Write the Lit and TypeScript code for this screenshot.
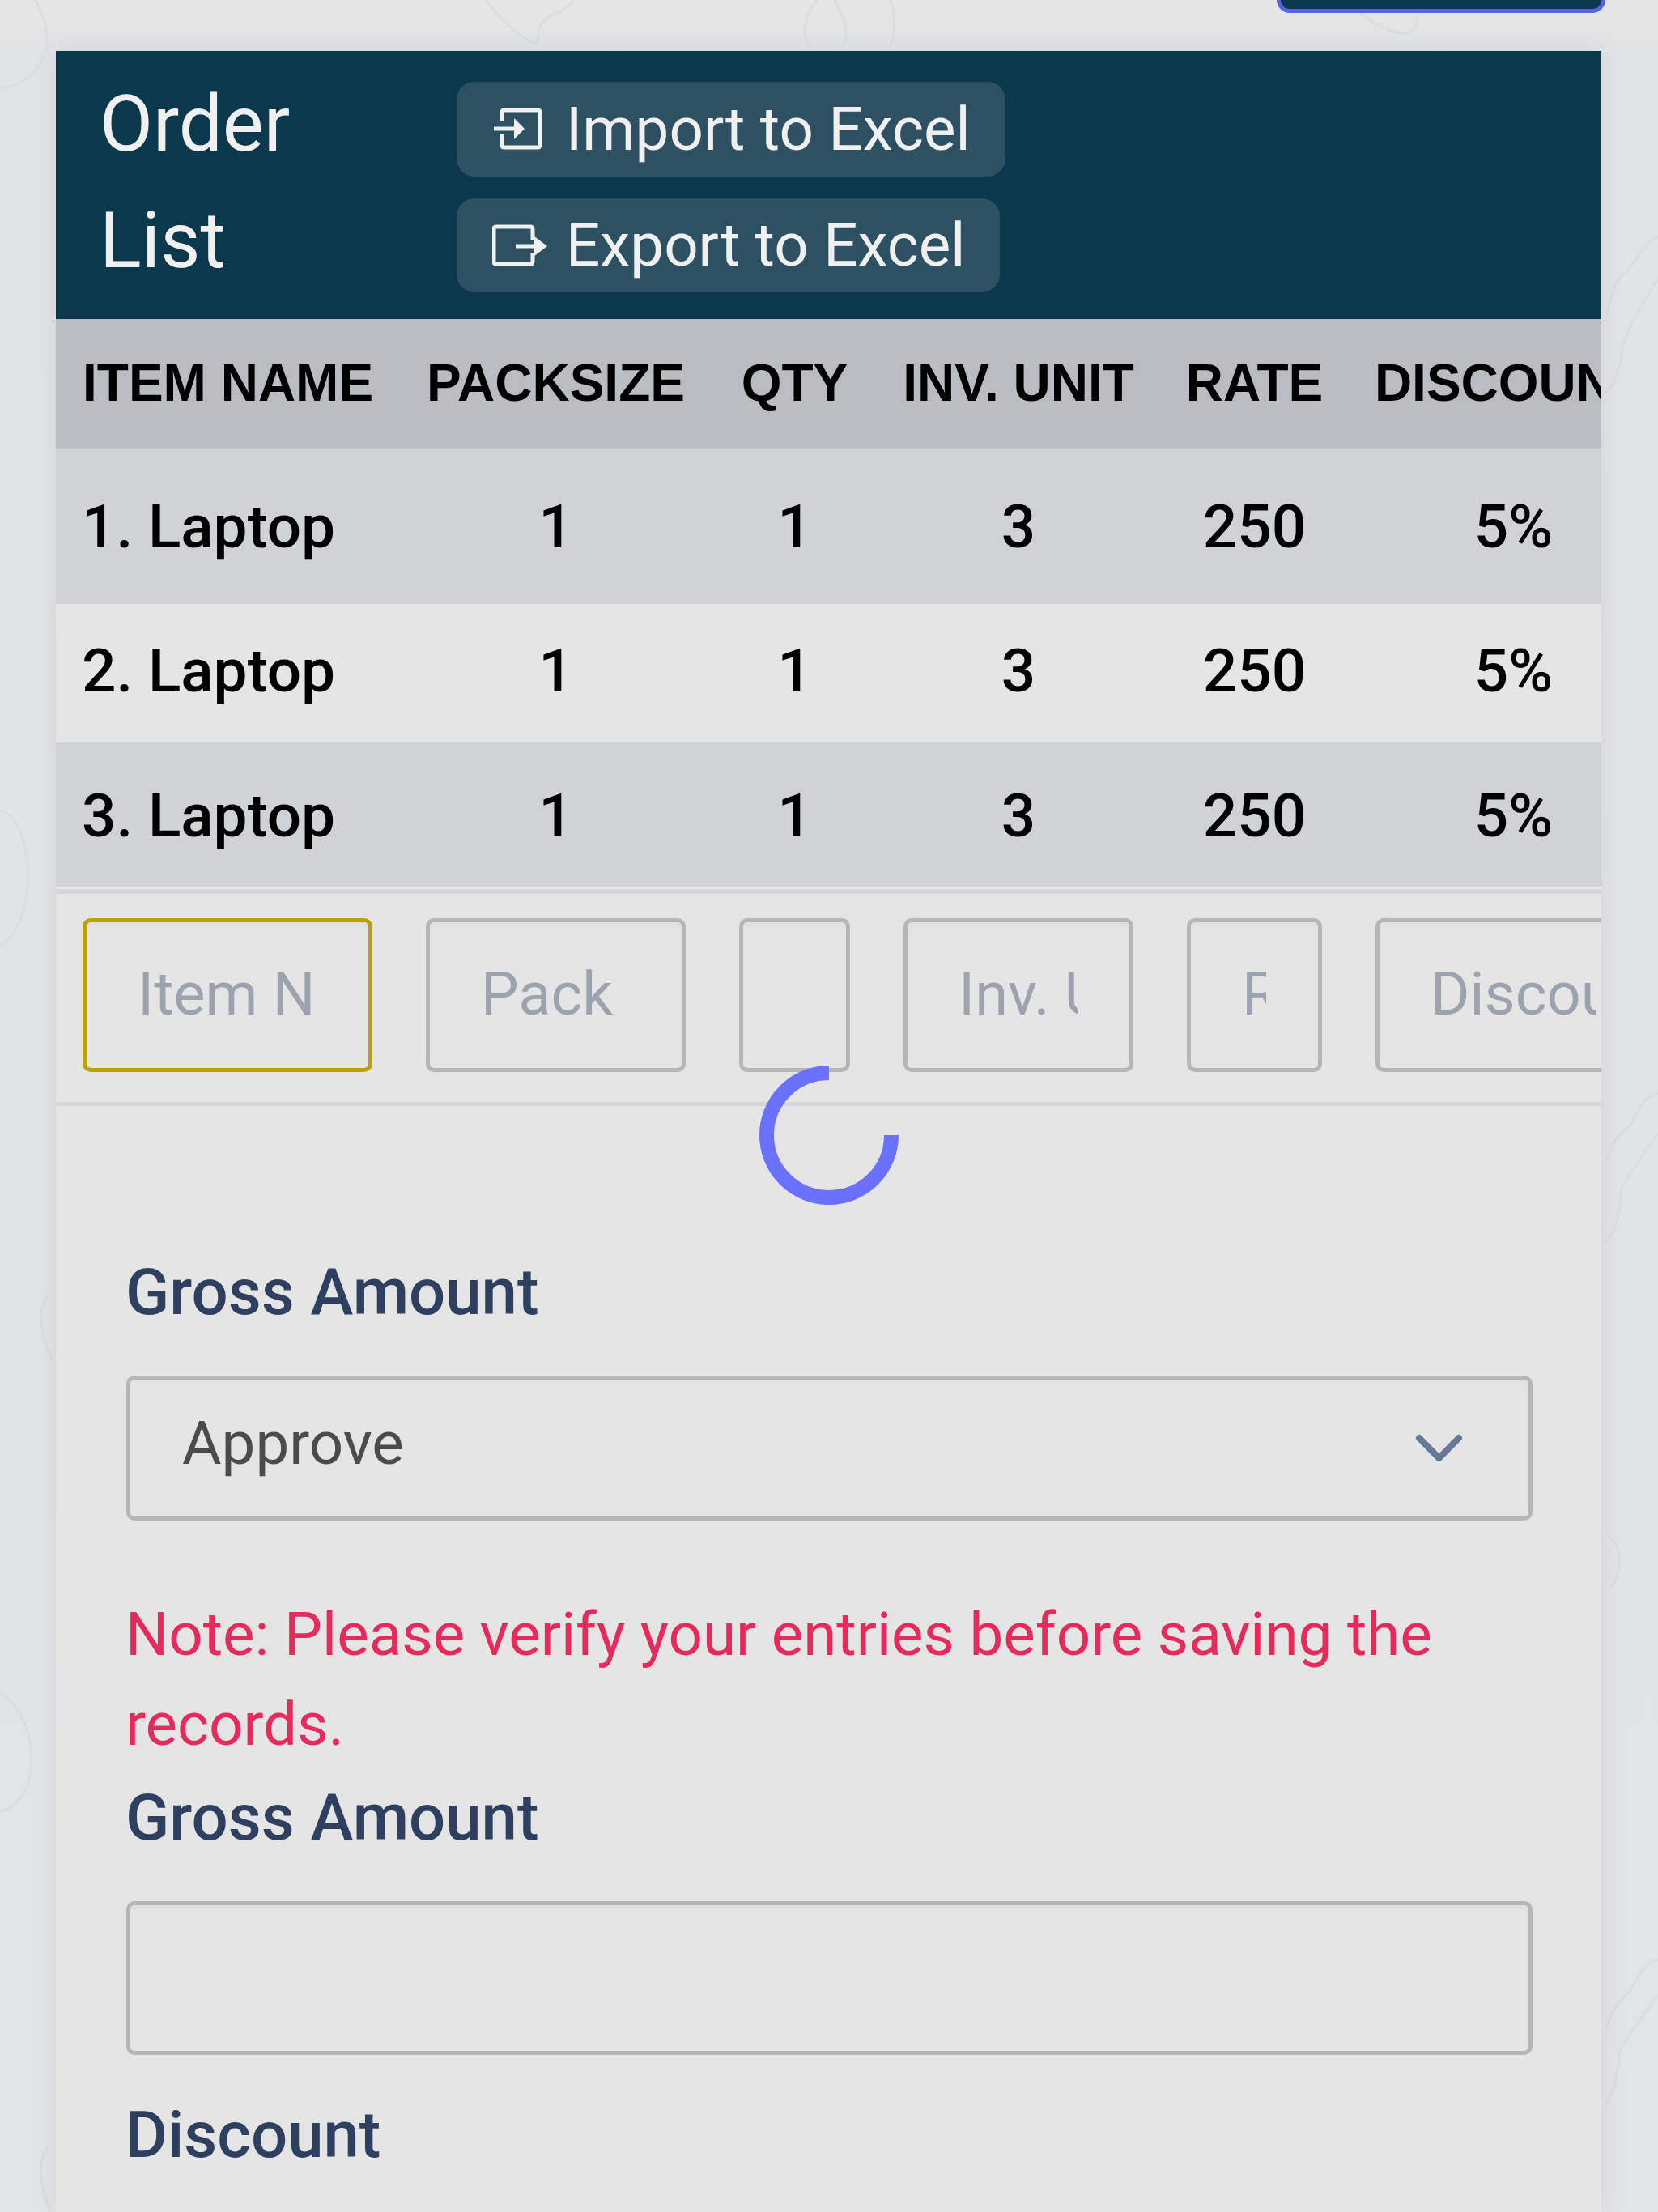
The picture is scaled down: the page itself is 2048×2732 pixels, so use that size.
import { LitElement, html, css, svg } from "lit";
import { customElement } from "lit/decorators.js";

const COLS = ["ITEM NAME", "PACKSIZE", "QTY", "INV. UNIT", "RATE", "DISCOUNT"];
const INPUTS = ["Item Name", "Pack Size", "", "Inv. Unit", "Rate", "Discount"];
const ROWS = [1, 2, 3];

const doodles = svg`
  <path d="M40 -5C70 40 62 85 18 105C8 110 0 108 -6 104"/>
  <path d="M597 -4C615 20 640 45 662 55M662 55C668 40 660 28 684 18C706 8 716 -2 700 -6"/>
  <path d="M1000 58C985 36 1000 12 1012 -4M1040 58C1055 38 1035 12 1030 -4M1100 58C1108 30 1104 10 1098 -4"/>
  <path d="M1680 16C1700 32 1730 48 1745 38C1752 30 1752 24 1750 18"/>
  <path d="M2048 292C2030 300 2022 322 2008 336C1990 350 1990 372 1984 392M2048 345C2030 372 2012 400 2004 430C2002 452 1996 470 1984 486"/>
  <path d="M2048 1350C2030 1354 2024 1370 2014 1390C2002 1398 1990 1412 1984 1435M2048 1400C2030 1425 2012 1450 2002 1470C2002 1495 1996 1520 1984 1535"/>
  <path d="M2048 2420C2030 2425 2022 2445 2012 2460C2002 2470 1992 2480 1984 2505M2048 2465C2030 2490 2012 2510 2000 2535C2000 2560 1994 2580 1984 2600"/>
  <path d="M0 1000C30 1010 36 1060 34 1095C30 1140 12 1165 -4 1170"/>
  <path d="M0 2090C30 2110 42 2150 38 2190C30 2225 14 2236 -4 2238"/>
  <path d="M60 2650C44 2670 50 2700 62 2732"/>
  <path d="M60 1600C44 1620 52 1650 64 1680"/>
  <path d="M1990 1900C2004 1910 2004 1945 1990 1960"/>
`;

@customElement("app-root")
export class AppRoot extends LitElement {
  static styles = css`
    :host {
      display: block;
      position: relative;
      width: 2048px;
      height: 2732px;
      overflow: hidden;
      background: linear-gradient(#e6e6e6 0, #e2e3e4 60px, #e3e4e6 100%);
      font-family: Roboto, "Liberation Sans", sans-serif;
    }
    .doodles {
      position: absolute;
      inset: 0;
      width: 2048px;
      height: 2732px;
      fill: none;
      stroke: #dcdde0;
      stroke-width: 3;
    }
    .page {
      position: relative;
      padding-left: 69px;
      width: 1909px;
    }
    .topbar {
      height: 63px;
      display: flex;
      justify-content: flex-end;
    }
    .top-btn {
      width: 406px;
      height: 15.5px;
      margin-right: -5px;
      box-sizing: border-box;
      background: #0b384c;
      border: 5.5px solid #5763d8;
      border-top: none;
      border-radius: 0 0 18px 18px;
    }
    .panel {
      background: #e5e5e5;
      box-shadow: 0 0 26px rgba(110, 118, 140, 0.14);
      height: 2669px;
      overflow: hidden;
      position: relative;
    }
    .head {
      height: 331px;
      box-sizing: border-box;
      padding: 38px 0 0 54px;
      background: #0b384c;
      display: flex;
      color: #f0f0f0;
    }
    .title {
      width: 441px;
      font-size: 96px;
      line-height: 144px;
      margin-top: -20px;
      height: 288px;
    }
    .title span {
      display: block;
    }
    .actions {
      display: flex;
      flex-direction: column;
      align-items: flex-start;
      gap: 27px;
    }
    .btn {
      height: 116.5px;
      box-sizing: border-box;
      display: flex;
      align-items: center;
      gap: 21px;
      padding: 0 43px 0 44px;
      background: #2d5062;
      border-radius: 22px;
      font-size: 74.5px;
      white-space: nowrap;
    }
    .btn svg {
      width: 70px;
      height: 54px;
      fill: none;
      stroke: #f0f0f0;
      stroke-width: 5;
      flex: none;
    }
    .btn svg .tip {
      fill: #f0f0f0;
      stroke: none;
    }
    table {
      width: 2004px;
      table-layout: fixed;
      border-collapse: separate;
      border-spacing: 0;
    }
    th {
      box-sizing: border-box;
      height: 160px;
      padding: 0 0 3px;
      background: #b9bcc1;
      color: #000;
      font-family: "Liberation Sans", Arial, sans-serif;
      font-size: 64px;
      font-weight: 700;
      white-space: nowrap;
      text-align: center;
    }
    th.first {
      text-align: left;
      padding-left: 33px;
    }
    th.last {
      padding-right: 9px;
    }
    td {
      padding: 0;
      color: #000;
      font-size: 74.8px;
      font-weight: 500;
      text-align: center;
      white-space: nowrap;
    }
    td.first {
      text-align: left;
      padding-left: 32px;
    }
    tr.r1 td {
      height: 192px;
      background: #d0d3d6;
    }
    tr.r2 td {
      box-sizing: border-box;
      height: 171px;
      padding-bottom: 6.500px;
      background: #e5e5e5;
    }
    tr.r3 td {
      box-sizing: border-box;
      height: 178px;
      padding-top: 2px;
      background: #d0d3d6;
    }
    tr.inputs td {
      box-sizing: border-box;
      height: 271px;
      padding: 36px 33px 0;
      vertical-align: top;
      border-top: 3px solid #e6e8ea;
      border-bottom: 5px solid #d6d8db;
      box-shadow: inset 0 6px 0 #d6d8db;
    }
    .cell-input,
    .field-input {
      display: block;
      width: 100%;
      height: 190px;
      box-sizing: border-box;
      margin: 0;
      padding: 0 64px 3px 63px;
      border: 5px solid #b6b6b6;
      border-radius: 10px;
      background: transparent;
      box-shadow: inset 0 5px 5px rgba(0, 0, 0, 0.025);
      font: 400 74px Roboto, sans-serif;
      outline: none;
    }
    .cell-input::placeholder {
      color: #9ca3af;
      opacity: 1;
    }
    .cell-input.focus {
      border-color: #b8a300;
    }
    .form {
      position: relative;
      padding: 180px 85px 0 87px;
    }
    .spinner {
      position: absolute;
      left: 50%;
      top: -50px;
      width: 172px;
      height: 172px;
      transform: translateX(-50%);
      fill: none;
      stroke: #6a70ff;
      stroke-width: 18;
    }
    label {
      display: block;
      color: #2e3f5f;
      font-size: 79.7px;
      font-weight: 500;
      line-height: 100px;
      margin-left: -1px;
    }
    .select {
      display: flex;
      align-items: center;
      justify-content: space-between;
      height: 179px;
      margin-top: 53px;
      box-sizing: border-box;
      padding: 0 78px 0 64px;
      border: 5px solid #b6b6b6;
      border-radius: 10px;
      box-shadow: inset 0 5px 5px rgba(0, 0, 0, 0.02);
      color: #4b4b4b;
      font-size: 74.5px;
    }
    .select span {
      margin-bottom: 12px;
    }
    .select svg {
      width: 65px;
      height: 40px;
      fill: none;
      stroke: #667799;
      stroke-width: 8;
      stroke-linecap: round;
      stroke-linejoin: round;
      flex: none;
    }
    .note {
      margin: 85px 0 10px -1px;
      color: #e62b5c;
      font-size: 74.500px;
      line-height: 111px;
    }
    .field-input {
      margin-top: 52.500px;
    }
    .discount {
      margin-top: 49.500px;
    }
  `;

  render() {
    return html`
      <svg class="doodles" viewBox="0 0 2048 2732">${doodles}</svg>
      <div class="page">
        <div class="topbar"><div class="top-btn"></div></div>
        <div class="panel">
          <div class="head">
            <div class="title"><span>Order</span><span>List</span></div>
            <div class="actions">
              <div class="btn">
                <svg viewBox="0 0 70 54">
                  <path d="M12 18V7Q12 4 15 4H56Q59 4 59 7V47Q59 50 56 50H15Q12 50 12 47V34"/>
                  <path d="M2 27H28"/>
                  <path class="tip" d="M27 14L40 27L27 40Z"/>
                </svg>
                Import to Excel
              </div>
              <div class="btn">
                <svg viewBox="0 0 70 54">
                  <path d="M50 20V7Q50 4 47 4H5Q2 4 2 7V47Q2 50 5 50H47Q50 50 50 47V36"/>
                  <path d="M29 28H54"/>
                  <path class="tip" d="M52 16L68 28L52 40Z"/>
                </svg>
                Export to Excel
              </div>
            </div>
          </div>
          <table>
            <colgroup>
              <col style="width:424px" /><col style="width:387px" /><col style="width:203px" />
              <col style="width:350px" /><col style="width:233px" /><col style="width:407px" />
            </colgroup>
            <thead>
              <tr>${COLS.map((c, i) => html`<th class=${i === 0 ? "first" : i === 5 ? "last" : ""}>${c}</th>`)}</tr>
            </thead>
            <tbody>
              ${ROWS.map(
                (n) => html`<tr class="r${n}">
                  <td class="first">${n}. Laptop</td>
                  <td>1</td><td>1</td><td>3</td><td>250</td><td>5%</td>
                </tr>`
              )}
              <tr class="inputs">
                ${INPUTS.map(
                  (p, i) => html`<td>
                    <input class="cell-input ${i === 0 ? "focus" : ""}" placeholder=${p} />
                  </td>`
                )}
              </tr>
            </tbody>
          </table>
          <div class="form">
            <svg class="spinner" viewBox="0 0 172 172"><path d="M86 9A77 77 0 1 0 163 86"/></svg>
            <label>Gross Amount</label>
            <div class="select">
              <span>Approve</span>
              <svg viewBox="0 0 65 40"><path d="M8 7L32.500 32L57 7"/></svg>
            </div>
            <div class="note">Note: Please verify your entries before saving the records.</div>
            <label>Gross Amount</label>
            <input class="field-input" />
            <label class="discount">Discount</label>
          </div>
        </div>
      </div>
    `;
  }
}
